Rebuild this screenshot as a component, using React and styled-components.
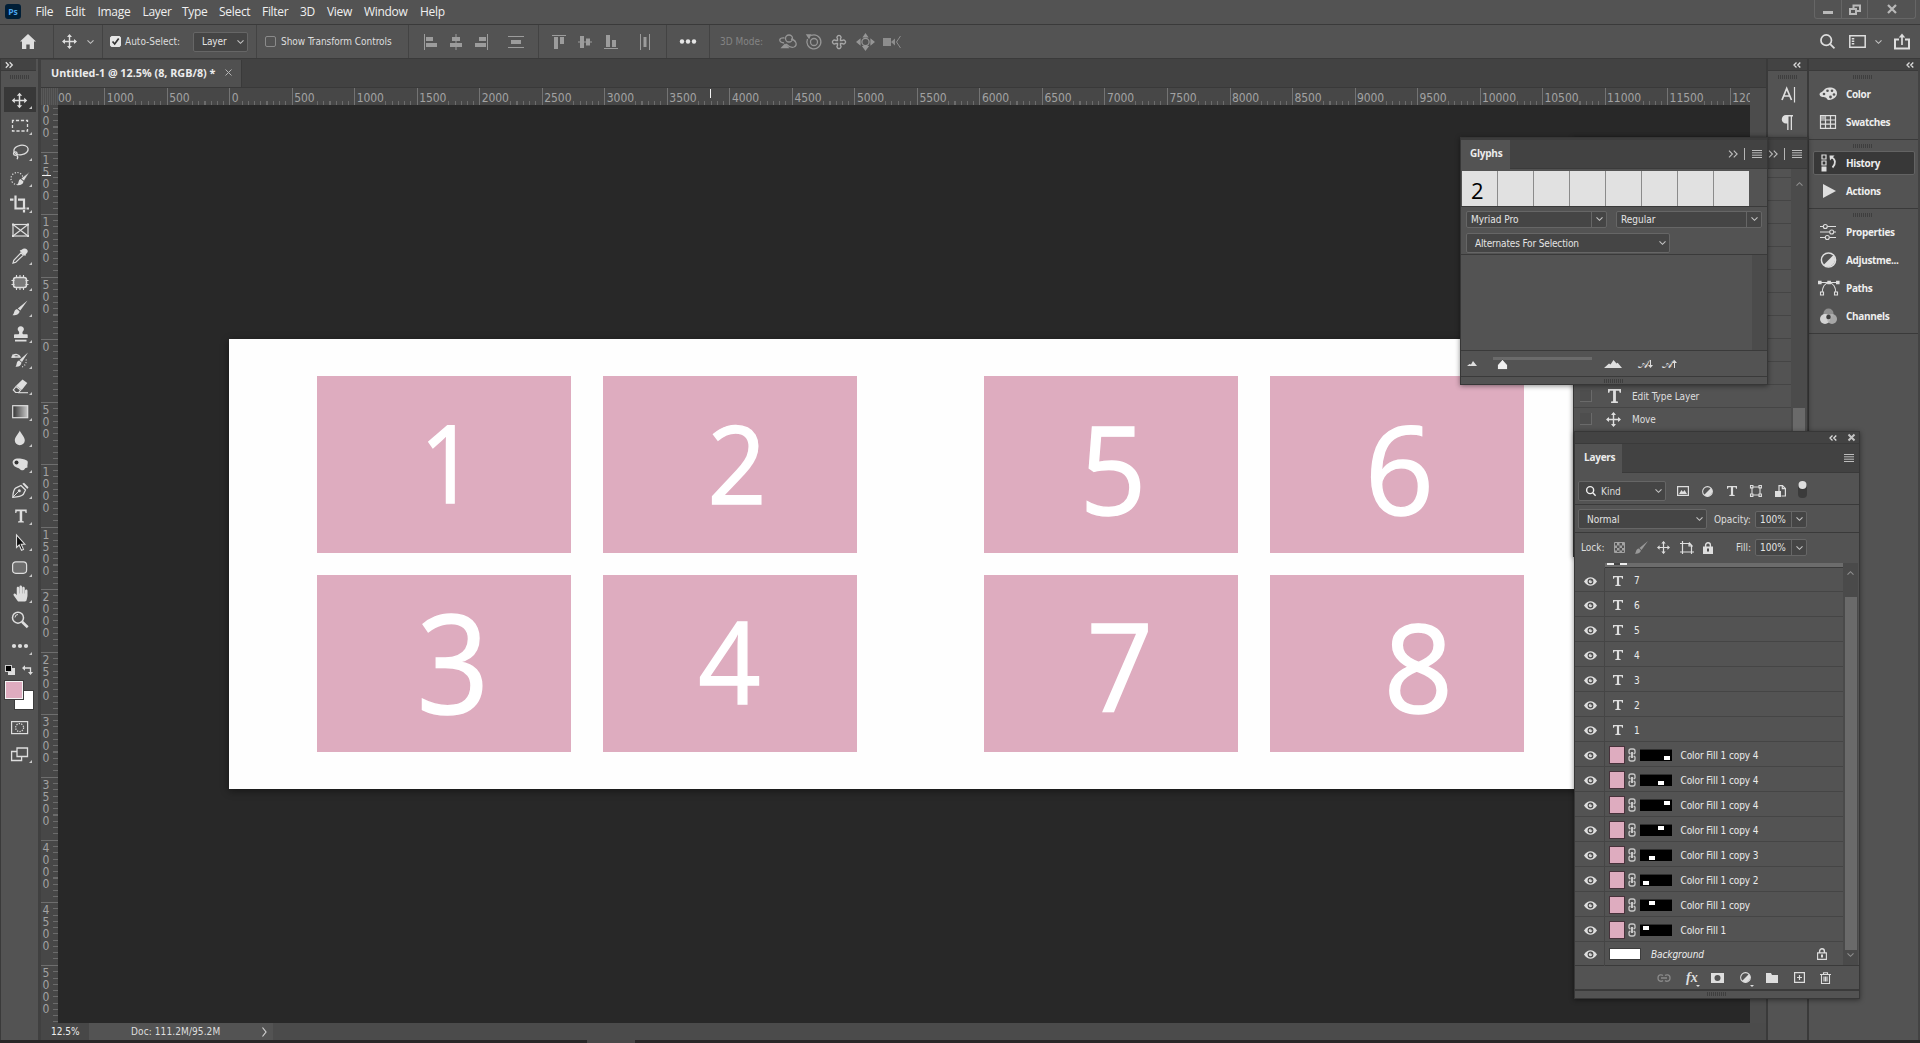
import React from 'react'
import styled, { createGlobalStyle } from 'styled-components'
import { FaHandPaper } from 'react-icons/fa'

const line = '#3a3a3a'
const panel = '#535353'
const dark = '#424242'
const ink = '#dedede'
const pink = '#deacbf'
const tahoma = '"DejaVu Sans Condensed", "DejaVu Sans", sans-serif'
const segoe = '"Open Sans", "Noto Sans", sans-serif'

const GlobalStyle = createGlobalStyle`
  * { box-sizing: border-box; }
  body { margin: 0; background: ${panel}; overflow: hidden; }
  svg { display: block; flex: none; overflow: visible; }
`

const Screen = styled.div`
  position: relative;
  display: flex;
  flex-direction: column;
  width: 1920px;
  height: 1043px;
  overflow: hidden;
  background: ${panel};
  color: ${ink};
  font-family: ${tahoma};
  font-size: 10px;
  white-space: nowrap;
`

/* ---------- menu bar ---------- */

const MenuBar = styled.div`
  display: flex;
  align-items: center;
  height: 25px;
  padding: 0 4px 1px 5px;
  border-bottom: 1px solid ${line};
  font-family: ${segoe};
  font-size: 12px;
  color: #f0f0f0;
`

const Logo = styled.div`
  width: 16px;
  height: 15px;
  margin-right: 14.5px;
  border-radius: 3px;
  background: #001e36;
  color: #4aa5ee;
  font: bold 8.5px/15px ${segoe};
  text-align: center;
`

const MenuItem = styled.div`
  width: ${p => p.$w}px;
  letter-spacing: -0.3px;
`

const WindowButtons = styled.div`
  display: flex;
  align-self: flex-start;
  margin-left: auto;
  width: 102px;
  height: 19px;
  border: 1px solid #666;
  border-top: 0;
  border-radius: 0 0 3px 3px;
`

const WindowButton = styled.div`
  display: flex;
  justify-content: center;
  padding-top: 4px;
  width: ${p => p.$w}px;
  border-right: ${p => (p.$last ? 0 : '1px solid #666')};
`

/* ---------- options bar ---------- */

const OptionsBar = styled.div`
  display: flex;
  height: 34px;
  border-bottom: 1px solid ${line};
`

const Group = styled.div`
  display: flex;
  align-items: center;
  width: ${p => (p.$w ? `${p.$w}px` : 'auto')};
  flex: ${p => (p.$w ? 'none' : 1)};
  padding-left: ${p => p.$pl}px;
  gap: ${p => p.$gap || 0}px;
  border-right: ${p => (p.$w ? '1px solid #434343' : 0)};
`

const Check = styled.div`
  width: 11px;
  height: 11px;
  border: 1px solid ${p => (p.$on ? '#e6e6e6' : '#8b8b8b')};
  border-radius: 2px;
  background: ${p => (p.$on ? '#e6e6e6' : 'transparent')};
`

const Label = styled.span`
  width: ${p => (p.$w ? `${p.$w}px` : 'auto')};
  margin-left: ${p => p.$ml || 0}px;
  letter-spacing: ${p => p.$ls || 0}px;
  color: ${p => p.$c || ink};
`

const Select = styled.div`
  display: flex;
  align-items: center;
  justify-content: space-between;
  width: ${p => p.$w}px;
  height: ${p => p.$h || 20}px;
  margin-left: ${p => p.$ml || 0}px;
  padding: 0 ${p => (p.$pr === undefined ? 3 : p.$pr)}px 0 ${p => p.$pl || 8}px;
  border: 1px solid #666;
  border-radius: 2px;
  background: #454545;
  color: #e4e4e4;
  letter-spacing: ${p => p.$ls || 0}px;
`

const Arrow = styled.div`
  display: flex;
  align-items: center;
  justify-content: center;
  align-self: stretch;
  width: 15px;
  border-left: 1px solid #666;
`

const Spacer = styled.div`
  width: ${p => p.$w}px;
  flex: ${p => (p.$w ? 'none' : 1)};
`

/* ---------- workspace ---------- */

const Workspace = styled.div`
  display: flex;
  height: 981px;
`

const Tools = styled.div`
  width: 41px;
  padding-right: 2px;
  border-left: 1px solid ${line};
  border-right: 3px solid #404040;
`

const StripHead = styled.div`
  display: flex;
  align-items: center;
  justify-content: ${p => (p.$left ? 'flex-start' : 'flex-end')};
  height: 12px;
  padding: 0 ${p => p.$px || 4}px;
  background: #434343;
  border-bottom: 1px solid ${line};
`

const Grip = styled.div`
  width: 19px;
  height: 4px;
  margin: ${p => p.$m};
  background: repeating-linear-gradient(90deg, #3e3e3e 0 1px, transparent 1px 2px);
`

const Tool = styled.div`
  width: 32px;
  height: 26px;
  margin-left: 3px;
  background: ${p => (p.$on ? '#383838' : 'transparent')};
  background-clip: content-box;
  padding-bottom: 1px;
`

const ColorWell = styled.div`
  position: relative;
  height: 54px;
  margin-top: 2px;
`

const Swatch = styled.div`
  position: absolute;
  left: ${p => p.$x}px;
  top: ${p => p.$y}px;
  width: ${p => p.$s}px;
  height: ${p => p.$s}px;
  background: ${p => p.$c};
  border: ${p => p.$b || 0};
`

const SwapIcon = styled.div`
  position: absolute;
  left: 21px;
  top: 4px;
`

const Document = styled.div`
  width: 1725px;
  display: flex;
  flex-direction: column;
`

const TabBar = styled.div`
  height: 29px;
  padding-top: 1px;
  background: ${dark};
  border-bottom: 1px solid #393939;
`

const DocTab = styled.div`
  display: flex;
  align-items: center;
  justify-content: space-between;
  width: 201px;
  height: 27px;
  padding: 0 9px 2px 10px;
  background: #505050;
  border-right: 1px solid ${line};
  color: #ececec;
  font: bold 10.8px ${segoe};
`

const RulerRow = styled.div`
  display: flex;
  height: 17px;
`

const Corner = styled.div`
  width: 17px;
  background: repeating-linear-gradient(90deg, #595959 0 1px, #4c4c4c 1px 2px);
`

const Ruler = styled.div`
  position: relative;
  display: flex;
  width: 1692px;
  overflow: hidden;
  background: #474747;
  color: #a2a2a2;
  font-size: 12px;
  letter-spacing: -0.1px;
`

const RulerCell = styled.div`
  flex: none;
  width: 62.53px;
  padding-left: 1.5px;
  border-left: 1px solid #737373;
  line-height: 20px;
  background: repeating-linear-gradient(90deg, #6b6b6b 0 1px, transparent 1px 6.25px) -1px 100% / 100% 4px no-repeat;
  &:first-child { margin-left: -16.3px; padding-left: 15.3px; }
`

const CellText = styled.span`
  display: inline-block;
  height: 17px;
  background: #474747;
`

const VRuler = styled.div`
  position: relative;
  width: 17px;
  overflow: hidden;
  background: #474747;
  color: #a2a2a2;
  font-size: 12px;
`

const VCell = styled.div`
  height: 62.53px;
  padding: 1px 0 0 1.5px;
  border-top: 1px solid #6e6e6e;
  line-height: 12px;
  white-space: pre;
  background: repeating-linear-gradient(180deg, #6b6b6b 0 1px, transparent 1px 6.25px) 100% -1px / 5px 100% no-repeat;
  &:first-child { margin-top: -15.7px; padding-top: 13px; }
`

const Mark = styled.div`
  position: absolute;
  left: ${p => p.$x}px;
  top: ${p => p.$y}px;
  width: ${p => p.$w}px;
  height: ${p => p.$h}px;
  background: #f2f2f2;
`

const Stage = styled.div`
  display: flex;
  height: 918px;
`

const Canvas = styled.div`
  width: 1692px;
  overflow: hidden;
  background: #282828;
`

const Artboard = styled.div`
  display: grid;
  grid-template-columns: 254px 254px 254px 254px;
  grid-template-rows: 177px 177px;
  column-gap: 32px;
  row-gap: 22px;
  align-content: start;
  width: 1460px;
  height: 450px;
  margin: 234px 0 0 171px;
  padding: 37px 88px;
  background: #fefefe;
  box-shadow: 0 2px 8px rgba(0, 0, 0, 0.45);
`

const Card = styled.div`
  position: relative;
  background: ${pink};
  margin-left: ${p => (p.$right ? 95 : 0)}px;
  margin-right: ${p => (p.$right ? -95 : 0)}px;
`

const Digit = styled.span`
  position: absolute;
  left: ${p => p.$x}px;
  top: ${p => p.$y}px;
  font: ${p => p.$s}px/1 ${segoe};
  color: #fff;
  -webkit-text-stroke: 1.4px #fff;
  transform: scaleX(${p => p.$k});
`

const VScroll = styled.div`
  width: 16px;
  background: #4c4c4c;
`

const Status = styled.div`
  display: flex;
  height: 17px;
  line-height: 18px;
  background: #4b4b4b;
`

const Zoom = styled.div`
  width: 48px;
  padding-left: 10px;
  background: #474747;
  color: #eee;
`

const DocInfo = styled.div`
  display: flex;
  align-items: center;
  width: 184px;
  padding-left: 42px;
  background: #535353;
  letter-spacing: 0.1px;
`

const NarrowDock = styled.div`
  width: 41px;
  border-left: 2px solid ${line};
`

const Dock = styled.div`
  width: 113px;
  border-left: 2px solid ${line};
  border-right: 2px solid #434343;
`

const DockGroup = styled.div`
  padding: 4px 3px 0 4px;
  height: ${p => p.$h}px;
  border-bottom: 1px solid ${line};
`

const DockItem = styled.div`
  display: flex;
  align-items: center;
  gap: 8px;
  height: 24px;
  margin-bottom: 4px;
  padding-left: 5px;
  border: 1px solid ${p => (p.$on ? '#636363' : 'transparent')};
  border-radius: 2px;
  background: ${p => (p.$on ? '#383838' : 'transparent')};
  color: #eee;
  font: bold 10px ${segoe};
  letter-spacing: -0.35px;
`

const BottomEdge = styled.div`
  display: flex;
  height: 3px;
  padding-left: 587px;
  background: #292627;
  &::before { content: ''; width: 48px; background: #4a4748; }
`

/* ---------- floating panels ---------- */

const Float = styled.div`
  position: absolute;
  left: ${p => p.$x}px;
  top: ${p => p.$y}px;
  width: ${p => p.$w}px;
  height: ${p => p.$h}px;
  display: flex;
  flex-direction: column;
  background: ${panel};
  border: 1px solid #373737;
  box-shadow: 0 1px 5px rgba(0, 0, 0, 0.45);
`

const PanelTabs = styled.div`
  display: flex;
  align-items: center;
  height: ${p => p.$h}px;
  flex: none;
  padding-right: ${p => p.$pr || 5}px;
  background: ${dark};
  border-top: ${p => p.$bt || 0};
  border-bottom: 1px solid ${line};
`

const PanelTab = styled.div`
  align-self: stretch;
  display: flex;
  align-items: center;
  width: ${p => p.$w}px;
  margin-bottom: -1px;
  padding: 0 0 3px 9px;
  background: ${panel};
  color: #ececec;
  font: bold 10px ${segoe};
  letter-spacing: -0.25px;
`

const Row = styled.div`
  display: flex;
  align-items: center;
  flex: none;
  height: ${p => p.$h}px;
  padding: ${p => p.$pt || 0}px 0 ${p => p.$pb || 0}px ${p => p.$pl || 0}px;
  border-bottom: ${p => (p.$line ? `1px solid ${line}` : 0)};
`

const GlyphCells = styled.div`
  display: grid;
  flex: none;
  grid-template-columns: repeat(8, 1fr);
  gap: 1px;
  width: 287px;
  height: 35px;
  margin: 2px 0 0 1px;
  background: #8b8b8b;
`

const GlyphCell = styled.div`
  padding: 5px 0 0 9px;
  background: #e1e1e1;
  color: #000;
  font: 22px/28px ${segoe};
`

const GlyphArea = styled.div`
  flex: none;
  height: 96px;
  border-bottom: 1px solid ${line};
  background: linear-gradient(#4b4b4b, #4b4b4b) 100% 0 / 15px 100% no-repeat;
`

const Slider = styled.div`
  display: flex;
  flex-direction: column;
  align-self: flex-start;
  width: 99px;
  margin: 6px 12px 0 16px;
`

const Track = styled.div`
  height: 3px;
  background: #6b6b6b;
`

const Thumb = styled.div`
  margin: -1px 0 0 4px;
`

const ScriptA = styled.span`
  width: ${p => p.$w}px;
  font-size: 12px;
  line-height: 12px;
`

const HistoryBody = styled.div`
  display: flex;
  flex: 1;
`

const HistoryList = styled.div`
  width: 217px;
  padding-top: 8px;
`

const HistoryRow = styled.div`
  display: flex;
  align-items: center;
  height: 23.06px;
  padding-left: 6px;
  border-top: 1px solid #454545;
  letter-spacing: -0.1px;
`

const HistoryBox = styled.div`
  width: 12px;
  height: 12px;
  border: solid #6a6a6a;
  border-width: 0 1px 1px 0;
  margin-right: 13px;
  background: #4e4e4e;
`

const HistoryScroll = styled.div`
  display: flex;
  flex-direction: column;
  align-items: center;
  width: 16px;
  padding-top: 13px;
  background: #4b4b4b;
`

const ScrollThumb = styled.div`
  width: 12px;
  height: ${p => p.$h}px;
  margin-top: ${p => p.$mt}px;
  background: #6a6a6a;
`

const LayersBody = styled.div`
  display: flex;
  height: 403px;
  border-bottom: 1px solid ${line};
`

const LayerList = styled.div`
  width: 268px;
`

const ClippedRow = styled.div`
  height: 5px;
  margin-left: 30px;
  padding-left: 2px;
  background: #6c6c6c;
  border-bottom: 1px solid #3a3a3a;
  &::before {
    content: '';
    display: block;
    width: 20px;
    height: 2px;
    background: linear-gradient(90deg, #eee 0 7px, #444 7px 13px, #eee 13px);
  }
`

const LayerRow = styled.div`
  display: flex;
  align-items: center;
  height: ${p => p.$h || 25}px;
  padding-top: ${p => (p.$last ? 0 : 2)}px;
  border-bottom: ${p => (p.$last ? 0 : '1px solid #454545')};
  color: #ececec;
  letter-spacing: -0.1px;
`

const EyeCell = styled.div`
  display: flex;
  align-items: center;
  justify-content: center;
  align-self: stretch;
  width: 30px;
  margin-top: -2px;
  padding: 3px 0 0 1px;
  border-right: 1px solid #454545;
`

const FillThumb = styled.div`
  width: 16px;
  height: 18px;
  margin: 0 3px 0 4px;
  border-bottom: 1px solid #e8e8e8;
  &::before {
    content: '';
    display: block;
    height: 16px;
    border: 1px solid #47323b;
    background: ${pink};
  }
`

const Mask = styled.div`
  position: relative;
  width: 32px;
  height: 12px;
  margin: 0 8.5px 0 4px;
  background: #000;
  border-top: 1px solid #2f2f2f;
  &::before {
    content: '';
    position: absolute;
    left: ${p => p.$x}px;
    top: ${p => p.$y}px;
    width: 6px;
    height: 4px;
    background: #fff;
  }
`

const PageThumb = styled.div`
  width: 32px;
  height: 12px;
  margin: -1px 10px 0 4px;
  background: #fff;
  border: 1px solid #3c3c3c;
`

const LayerScroll = styled.div`
  display: flex;
  flex-direction: column;
  align-items: center;
  width: 15px;
  padding: 8px 0 8px;
  background: #4a4a4a;
`

const FooterIcons = styled.div`
  display: flex;
  align-items: center;
  height: 25px;
  padding-left: 82px;
  border-bottom: 2px solid ${line};
`

/* ---------- icons ---------- */

const Chevron = ({ up, c = '#c4c4c4', w = 7 }) => (
  <svg width={w} height="4" viewBox="0 0 7 4" fill="none" stroke={c} strokeWidth="1.1">
    <path d={up ? 'M.5 3.7 3.5.7l3 3' : 'M.5.3l3 3 3-3'} />
  </svg>
)

const Double = ({ left, big, c = '#dcdcdc' }) => (
  <svg width={big ? 10 : 8} height={big ? 8 : 6} viewBox="0 0 8 6" fill="none" stroke={c} strokeWidth={big ? 0.9 : 1.3}>
    <path d={left ? 'M3.5.5 1 3l2.5 2.5M7.3.5 4.8 3l2.5 2.5' : 'M.8.3 3.5 3 .8 5.7M4.6.3 7.3 3 4.6 5.7'} />
  </svg>
)

const Burger = () => (
  <svg width="10" height="8" stroke="#bdbdbd" strokeWidth="1"><path d="M0 .5h10M0 2.8h10M0 5.2h10M0 7.5h10" /></svg>
)

const Bar = () => <svg width="1" height="12"><path d="M.5 0v12" stroke="#b5b5b5" /></svg>

const MoveIcon = ({ s = 15 }) => (
  <svg width={s} height={s} viewBox="0 0 15 15">
    <path d="M7.5 1v13M1 7.5h13" stroke={ink} strokeWidth="1.4" />
    <path d="M7.5 0 10 3H5zM7.5 15 10 12H5zM0 7.5 3 5v5zM15 7.5 12 5v5z" fill={ink} />
  </svg>
)

const TypeIcon = ({ w = 11, h = 12 }) => (
  <svg width={w} height={h} viewBox="0 0 11 12" preserveAspectRatio="none">
    <path d="M0 0h11v3.3H9.9L9.4 1.5H6.7v8.9l1.7.4V12H2.6v-1.200l1.700-.4V1.500H1.600l-.5 1.800H0z" fill={ink} />
  </svg>
)

const AdjustIcon = ({ s = 12 }) => (
  <svg width={s} height={s} viewBox="0 0 16 16">
    <circle cx="8" cy="8" r="7.1" fill="none" stroke={ink} strokeWidth="1.5" />
    <path d="M13 3A7.1 7.1 0 0 1 3 13z" fill={ink} />
  </svg>
)

const SearchIcon = ({ s = 14, c = ink, sw = 1.6 }) => (
  <svg width={s} height={s} viewBox="0 0 14 14" fill="none" stroke={c} strokeWidth={sw}>
    <circle cx="5.8" cy="5.8" r="4.9" /><path d="m9.5 9.5 4 4" />
  </svg>
)

const BrushIcon = ({ c = ink, s = 14 }) => (
  <svg width={s} height={s} viewBox="0 0 14 14" fill={c}>
    <path d="M14 0 7 9.7 4.8 7.6z" /><path d="M4.2 8.2 6.3 10.3C6.2 12.6 3.5 14 0 13.6 1.5 12 1 8.6 4.2 8.2z" />
  </svg>
)

const LockIcon = ({ open }) => (
  <svg width="10" height="12" viewBox="0 0 10 12">
    <path d="M2.6 5V3.2a2.4 2.4 0 0 1 4.8 0V5" fill="none" stroke={ink} strokeWidth="1.4" />
    {open
      ? <path d="M.6 4.9h8.8v6.5H.6z" fill="none" stroke={ink} strokeWidth="1.1" />
      : <path d="M0 4.5h10V12H0z" fill={ink} />}
    <path d="M4 6.6h2v2.8H4z" fill={open ? ink : '#4a4a4a'} />
  </svg>
)

const Eye = () => (
  <svg width="13" height="9" viewBox="0 0 13 9">
    <path d="M0 4.500C2 1.300 4.200.2 6.500.2S11 1.300 13 4.500C11 7.700 8.800 8.800 6.500 8.800S2 7.700 0 4.500z" fill={ink} />
    <circle cx="6.5" cy="4.5" r="2.900" fill="#4a4a4a" />
    <circle cx="6.5" cy="4.5" r="1.700" fill={ink} />
    <circle cx="7.2" cy="3.8" r=".7" fill="#4a4a4a" />
  </svg>
)

const ChainIcon = () => (
  <svg width="8" height="14" viewBox="0 0 8 14" fill="none" stroke="#c8c8c8" strokeWidth="1.3">
    <path d="M1 5.5V3a2 2 0 0 1 2-2h2a2 2 0 0 1 2 2v2.500M1 8.500V11a2 2 0 0 0 2 2h2a2 2 0 0 0 2-2V8.500" />
    <path d="M4 4v6" strokeWidth="2" />
    <path d="M1 5.500h1.500M7 5.500H5.500M1 8.500h1.500M7 8.500H5.500" />
  </svg>
)

// every tool is drawn in its own 32x26 cell
const toolIcons = [
  <g><path d="M15.5 7.5v12M9.5 13.5h12" stroke={ink} strokeWidth="1.5" /><path d="M15.5 5.8l2.7 3h-5.4zM15.5 21.2l2.700-3h-5.400zM7.800 13.500l3-2.700v5.400zM23.200 13.500l-3-2.700v5.400z" fill={ink} /></g>,
  <rect x="8.5" y="7.5" width="15" height="10.5" fill="none" stroke={ink} strokeWidth="1.3" strokeDasharray="3.2 1.8" strokeDashoffset="1.6" />,
  <g fill="none" stroke={ink} strokeWidth="1.3"><ellipse cx="17" cy="11" rx="7.2" ry="4.8" transform="rotate(-10 17 11)" /><circle cx="11.3" cy="14.6" r="1.8" /><path d="M12.5 16.200c1.500.8 1.500 2.300.6 4" /></g>,
  <g><circle cx="13" cy="13.5" r="6" fill="none" stroke={ink} strokeWidth="1.2" strokeDasharray="1.2 1.6" /><path d="M25.500 7 20 16l-3-2.500z" fill={ink} stroke={panel} strokeWidth=".6" /><path d="M16.500 14l3 2.600c-.3 2.800-3 4-6.500 3.700 2-1.500 1-5.500 3.500-6.300z" fill={ink} /></g>,
  <g fill="none" stroke={ink} strokeWidth="2.2"><path d="M11.5 4.500v13h10" /><path d="M14 8.700h6V17M20 19v2.500" /><path d="M6 8.700h3.500M22.500 17.500h2.500" /></g>,
  <g fill="none" stroke={ink} strokeWidth="1.2"><rect x="9" y="7.5" width="15" height="11.5" /><path d="m9 7.500 15 11.500M24 7.500 9 19" /><path d="M8 7.500h2M23 7.500h2M8 19h2M23 19h2" strokeWidth="2" /></g>,
  <g><path d="M23 6.500c1.500 1.500.7 3-1 4.500l-.7 2-1.300-.8-3.500-3.500-.8-1.200 2-.7c1.500-1.500 3.800-1.800 5.300-.3z" fill={ink} /><path d="m17 9.800 2.300 2.300-7.500 7.200-2.800.8.800-2.800z" fill="none" stroke={ink} strokeWidth="1.2" /></g>,
  <g stroke={ink}><rect x="9.5" y="8.5" width="13" height="10" rx="2.5" fill="#7a7a7a" strokeWidth="1.5" /><path d="M12.500 6v3M16 6v3M19.500 6v3M12.500 18v3M16 18v3M19.500 18v3M7.500 11.500h3M7.500 15.500h3M21.500 11.500h3M21.500 15.500h3" strokeWidth="1.1" /></g>,
  <g fill={ink}><path d="M23.500 5.500 16.300 15.600l-2.500-2.200z" /><path d="m13 14 2.500 2.300c0 2.700-3 4.300-7 4 2-1.500 1.300-5.700 4.500-6.300z" /></g>,
  <g fill={ink}><path d="M16.700 5.200c2 0 3.200 1.400 3.200 3 0 1.500-1.500 2-1.500 3.500 0 1 .6 1.600 1.500 1.600h2.600c1 0 1.200.5 1.200 1.200v2.500H10v-2.500c0-.7.3-1.200 1.200-1.200h2.600c.9 0 1.400-.6 1.400-1.600 0-1.500-1.500-2-1.500-3.500 0-1.600 1-3 3-3z" /><path d="M11 18.700h11.500v1.800H11z" /></g>,
  <g><path d="M24 5.500 18 15l-2.500-2zM15 13.500l2.500 2c-.3 3-2.500 4.500-6 4.200 1.500-1.500.7-5.500 3.500-6.200z" fill={ink} /><path d="M8 10h8c-1-3-5-3-6.500-1.500" fill="none" stroke={ink} strokeWidth="1.3" /><path d="m7 10.800 2-4 2.500 3.600z" fill={ink} /><path d="M22 12.500c1 3-1 6.500-4 7.500" fill="none" stroke={ink} strokeWidth="1.1" strokeDasharray="1 1.700" /></g>,
  <g><path d="m18.500 6.500 4.800 3.500-5.500 7-5.800-4.200z" fill={ink} /><path d="m12 13.500-2.700 3.500 2.300 2.500h3l2-2.500z" fill="none" stroke={ink} strokeWidth="1.2" /><path d="M14 19.700h10" stroke={ink} strokeWidth="1.1" /></g>,
  <g><defs><linearGradient id="toolGradient"><stop offset="0" stopColor="#333" /><stop offset="1" stopColor="#c9c9c9" /></linearGradient></defs><rect x="8.7" y="6.7" width="15" height="12" fill="url(#toolGradient)" stroke={ink} strokeWidth="1.2" /></g>,
  <path d="M15.800 5.500c1 3.200 5 6.200 5 9.700a5 5 0 0 1-10 0c0-3.500 4-6.500 5-9.700z" fill={ink} />,
  <g><path d="M9 13c-1.500-4 2-6 7-5.500 4 .3 6 1.500 7.500 2.500.8 2-.5 4 0 6.500-1.500.8-2 0-3 1.800-1 1.600-3.500 1.200-4.500 0-2-2.300-5.500-1.300-7-5.300z" fill={ink} /><circle cx="12.5" cy="11.5" r="2" fill="#333" /></g>,
  <g><path d="M8.800 20.300c.2-4.500.8-8 3.200-9.500l5-2.300 4.500 4.500-2.300 4.500c-2 2-5.800 2.500-10.400 2.800z" fill="none" stroke={ink} strokeWidth="1.3" /><path d="m18.300 6.700 1.700-1 4.500 4.500-1.200 1.700z" fill={ink} /><path d="m9 20 5.500-5.500" stroke={ink} /><circle cx="15.3" cy="13.7" r="1.5" fill={ink} /></g>,
  <g transform="translate(11.2 6.5)"><path d="M0 0h11.500v3.500h-1.100L9.900 1.700H7v9.800l1.700.4V13H2.800v-1.100l1.700-.4V1.700H1.600l-.5 1.800H0z" fill={ink} /></g>,
  <path d="M12.500 6v12.500l2.700-2.500 2.300 5.300 2-.9-2.300-5.200h3.600z" fill="#111" stroke={ink} strokeWidth="1.1" />,
  <rect x="8.6" y="6.8" width="14" height="11.5" rx="3.2" fill="#6e6e6e" stroke={ink} strokeWidth="1.2" />,
  <FaHandPaper x="8.5" y="4.500" size="16" color={ink} />,
  <g fill="none" stroke={ink}><circle cx="14" cy="10.7" r="5.5" strokeWidth="1.5" /><path d="M11 10.500a3 3 0 0 1 3-3" strokeWidth="1" /><path d="m18 14.700 5.700 5.500" strokeWidth="2.600" /></g>,
  <g fill={ink}><circle cx="10" cy="13" r="2.1" /><circle cx="16" cy="13" r="2.1" /><circle cx="22" cy="13" r="2.1" /></g>,
]
const noFlyout = [5, 20]

const ToolCell = ({ children, flyout, on }) => (
  <Tool $on={on}>
    <svg width="32" height="25" viewBox="0 0 32 25">
      {children}
      {flyout && <path d="M28 19v3h-3z" fill="#c8c8c8" />}
    </svg>
  </Tool>
)

const AlignSvg = ({ w, children }) => (
  <svg width={w} height="16" viewBox={`0 0 ${w} 16`} fill="#9c9c9c">{children}</svg>
)

/* ---------- parts ---------- */

const menus = [
  ['File', 29.5], ['Edit', 32.5], ['Image', 45], ['Layer', 39.5], ['Type', 37], ['Select', 43],
  ['Filter', 38], ['3D', 27], ['View', 37], ['Window', 56], ['Help', 40],
]

const TopMenu = () => (
  <MenuBar>
    <Logo>Ps</Logo>
    {menus.map(([name, w]) => <MenuItem key={name} $w={w}>{name}</MenuItem>)}
    <WindowButtons>
      <WindowButton $w={28}><svg width="10" height="10"><path d="M0 7h10v3H0z" fill="#b9b9b9" /></svg></WindowButton>
      <WindowButton $w={27}>
        <svg width="12" height="11" fill="none" stroke="#b9b9b9" strokeWidth="2"><path d="M1 5h6v5H1zM4.5 4V1.500H11V7H8" /></svg>
      </WindowButton>
      <WindowButton $w={48} $last>
        <svg width="10" height="10" stroke="#b9b9b9" strokeWidth="2.2"><path d="m1 1 8 8M9 1 1 9" /></svg>
      </WindowButton>
    </WindowButtons>
  </MenuBar>
)

const Options = () => (
  <OptionsBar>
    <Group $w={54} $pl={20}>
      <svg width="16" height="15" viewBox="0 0 16 15" fill={ink}><path d="M8 0l8 7.500h-2V15H9.700v-4.500H6.300V15H2V7.500H0z" /></svg>
    </Group>
    <Group $w={49} $pl={8} $gap={10}><MoveIcon /><Chevron /></Group>
    <Group $w={154} $pl={7}>
      <Check $on><svg width="9" height="9" fill="none" stroke="#333" strokeWidth="1.7"><path d="M1.500 4.500 3.700 7l4-5.500" /></svg></Check>
      <Label $ml={4} $w={68}>Auto-Select:</Label>
      <Select $w={55} $ls={-0.1}>Layer<Chevron /></Select>
    </Group>
    <Group $w={152} $pl={8}><Check /><Label $ml={5} $ls={-0.05}>Show Transform Controls</Label></Group>
    <Group $w={130} $pl={15}>
      <AlignSvg w={13}><path d="M0 0h1v16H0zM2 3h7v4H2zM2 9h11v4H2z" /></AlignSvg>
      <Spacer $w={13} />
      <AlignSvg w={12}><path d="M5.500 0h1v16h-1zM2 3h8v4H2zM0 9h12v4H0z" /></AlignSvg>
      <Spacer $w={13} />
      <AlignSvg w={13}><path d="M12 0h1v16h-1zM4 3h7v4H4zM0 9h11v4H0z" /></AlignSvg>
      <Spacer $w={20} />
      <AlignSvg w={16}><path d="M0 2h16v1H0zM3 6h10v4H3zM0 13h16v1H0z" /></AlignSvg>
    </Group>
    <Group $w={128} $pl={13}>
      <AlignSvg w={14}><path d="M0 1h14v1H0zM2 3h4v12H2zM8 3h4v7H8z" /></AlignSvg>
      <Spacer $w={12} />
      <AlignSvg w={14}><path d="M0 7.500h14v1H0zM2 2h4v12H2zM8 4.500h4v7H8z" /></AlignSvg>
      <Spacer $w={12} />
      <AlignSvg w={14}><path d="M0 14h14v1H0zM2 1h4v12H2zM8 6h4v7H8z" /></AlignSvg>
      <Spacer $w={22} />
      <AlignSvg w={10}><path d="M0 0h1v16H0zM3.500 3h3v10h-3zM9 0h1v16H9z" /></AlignSvg>
    </Group>
    <Group $w={43} $pl={13}>
      <svg width="16" height="5" fill="#e6e6e6"><circle cx="2" cy="2.5" r="2.2" /><circle cx="8" cy="2.5" r="2.2" /><circle cx="14" cy="2.5" r="2.2" /></svg>
    </Group>
    <Group $pl={10}>
      <Label $c="#848484" $w={59}>3D Mode:</Label>
      <svg width="18" height="16" fill="none" stroke="#969696" strokeWidth="1.3">
        <path d="M5 9C-1 8-.5 3.500 5.500 4M12 5c5 1 7 6 3 8-3 1-6-1-8-3" /><circle cx="10" cy="4.5" r="3.5" /><path d="M3 13.500h6l-3-3z" fill="#969696" />
      </svg>
      <Spacer $w={9} />
      <svg width="16" height="16" fill="none" stroke="#969696" strokeWidth="1.3"><path d="M5 1.500A7 7 0 1 1 1.500 5" /><circle cx="8" cy="8" r="3.5" /><path d="m1 1 3.500 0L3 4z" fill="#969696" /></svg>
      <Spacer $w={9} />
      <svg width="16" height="16" viewBox="0 0 16 16" fill="none" stroke="#a8a8a8" strokeWidth="1.4">
        <path d="M6.500 6.500V4.800a2 2 0 1 1 3 0v1.700h1.700a2 2 0 1 1 0 3H9.500v1.700a2 2 0 1 1-3 0V9.500H4.800a2 2 0 1 1 0-3z" />
      </svg>
      <Spacer $w={10} />
      <svg width="17" height="16" viewBox="0 0 17 16" fill="none" stroke="#969696" strokeWidth="1.2">
        <circle cx="8.5" cy="8" r="3.6" /><path d="M8.500 0 10.500 3H6.500zM8.500 16 11 12.500H6zM0 8l3-2.500v5zM17 8l-3-2.500v5z" fill="#969696" />
      </svg>
      <Spacer $w={9} />
      <svg width="18" height="14" fill="#8d8d8d"><path d="M0 3h8v8H0zM8 7l4-3.500v7z" /><path d="m17.500 1-4 6 4 6" fill="none" stroke="#8d8d8d" /></svg>
      <Spacer />
      <SearchIcon s={15} />
      <Spacer $w={14} />
      <svg width="17" height="13" fill="none" stroke={ink} strokeWidth="1.5"><path d="M.8.8h15.400v11.400H.8z" /><path d="M4 3v7" strokeWidth="2.5" strokeDasharray="1.5 1" /></svg>
      <Spacer $w={9} />
      <Chevron />
      <Spacer $w={12} />
      <svg width="16" height="17" fill="none" stroke={ink} strokeWidth="2"><path d="M5 6.500H1v9h14v-9h-4" /><path d="M8 12V2" strokeWidth="1.7" /><path d="m4.800 4.500 3.200-4 3.200 4z" fill={ink} stroke="none" /></svg>
      <Spacer $w={10} />
    </Group>
  </OptionsBar>
)

const ToolColumn = () => (
  <Tools>
    <StripHead $left><Double /></StripHead>
    <Grip $m="4px auto 8px 9px" />
    {toolIcons.map((icon, i) => <ToolCell key={i} on={i === 0} flyout={!noFlyout.includes(i)}>{icon}</ToolCell>)}
    <ColorWell>
      <Swatch $x={7} $y={7} $s={7} $c={ink} />
      <Swatch $x={4} $y={4} $s={7} $c="#000" $b="1px solid #ccc" />
      <SwapIcon>
        <svg width="11" height="10" fill="none" stroke={ink} strokeWidth="1.3"><path d="M2 3h6.500v4" /><path d="M0 3l3-2.700v5.400zM8.500 10 6 7h5z" fill={ink} stroke="none" /></svg>
      </SwapIcon>
      <Swatch $x={13} $y={29} $s={20} $c="#fff" $b="1px solid #3c3c3c" />
      <Swatch $x={3} $y={19} $s={20} $c={pink} $b="1px solid #3c3c3c" />
      <Swatch $x={4} $y={20} $s={18} $c={pink} $b="1px solid #f4f4f4" />
    </ColorWell>
    <ToolCell>
      <g fill="none" stroke={ink} strokeWidth="1.2"><rect x="7.6" y="6.6" width="16" height="12" /><circle cx="15.6" cy="12.6" r="4" strokeDasharray="1.3 1.2" /></g>
    </ToolCell>
    <ToolCell flyout>
      <g fill="#535353" stroke={ink} strokeWidth="1.3"><path d="M7.600 10.500h10v9h-10z" /><path d="M13 7h10.500v8.500H13z" /></g>
    </ToolCell>
  </Tools>
)

// the first label of each ruler starts before the visible range
const hLabels = ['00', 1000, 500, ...Array.from({ length: 25 }, (_, i) => i * 500)]
const vLabels = ['000', 1500, 1000, 500, ...Array.from({ length: 11 }, (_, i) => i * 500)]

// digit offsets are measured inside their card
const cards = [
  { n: 1, x: 99.5, y: 32.3, s: 108, k: 0.9 },
  { n: 2, x: 102.8, y: 32, s: 108.5, k: 0.95 },
  { n: 5, x: 93.5, y: 31.4, s: 122.500, k: 0.95 },
  { n: 6, x: 94.4, y: 30.4, s: 123.500, k: 0.98 },
  { n: 3, x: 96.500, y: 18, s: 136.500, k: 0.93 },
  { n: 4, x: 94.400, y: 29.300, s: 113.500, k: 0.96 },
  { n: 7, x: 101.300, y: 29.300, s: 122, k: 0.95 },
  { n: 8, x: 113.400, y: 28.600, s: 123.500, k: 0.98 },
]

const DocumentArea = () => (
  <Document>
    <TabBar>
      <DocTab>
        Untitled-1 @ 12.5% (8, RGB/8) *
        <svg width="7" height="7" stroke="#b5b5b5"><path d="m.5.5 6 6M6.500.5l-6 6" /></svg>
      </DocTab>
    </TabBar>
    <RulerRow>
      <Corner />
      <Ruler>
        {hLabels.map((n, i) => <RulerCell key={i}><CellText>{n}</CellText></RulerCell>)}
        <Mark $x={652} $y={1} $w={1} $h={9} />
      </Ruler>
      <VScroll />
    </RulerRow>
    <Stage>
      <VRuler>
        {vLabels.map((n, i) => <VCell key={i}>{String(n).split('').join('\n')}</VCell>)}
        <Mark $x={1} $y={70} $w={9} $h={1} />
      </VRuler>
      <Canvas>
        <Artboard>
          {cards.map(c => (
            <Card key={c.n} $right={[5, 6, 7, 8].includes(c.n)}>
              <Digit $x={c.x} $y={c.y} $s={c.s} $k={c.k}>{c.n}</Digit>
            </Card>
          ))}
        </Artboard>
      </Canvas>
      <VScroll />
    </Stage>
    <Status>
      <Zoom>12.5%</Zoom>
      <DocInfo>
        Doc: 111.2M/95.2M
        <Spacer />
        <svg width="5" height="10" fill="none" stroke="#d0d0d0" strokeWidth="1.2"><path d="m.5.5 3.500 4.500L.5 9.500" /></svg>
        <Spacer $w={6} />
      </DocInfo>
    </Status>
  </Document>
)

const dockGroups = [
  {
    h: 69,
    items: [
      ['Color', <svg width="19" height="16" viewBox="0 0 19 16"><path d="M4 5C6 2 9 1 12 1.500c4 .5 6 3 6 6s-3 6-8 6.500c-2 .1-2-2-3.500-2.500C4 11 1 11 .5 8.500.5 6.500 2.500 6.500 4 5z" fill={ink} /><g fill={panel}><circle cx="5" cy="8" r="1.3" /><circle cx="8.5" cy="4.8" r="1.3" /><circle cx="13" cy="4.8" r="1.3" /><circle cx="15" cy="8.5" r="1.3" /><circle cx="11.5" cy="11" r="1.4" /></g></svg>],
      ['Swatches', <svg width="19" height="14" viewBox="0 0 19 14" fill="none" stroke={ink}><path d="M1.500.7h15v12.600h-15zM1.500 5h15M1.500 9.200h15M6.500.7v12.600M11.500.7v12.600" strokeWidth="1.2" /><path d="M2 1h4.500v3.500H2z" fill="#aaa" stroke="none" /></svg>],
    ],
  },
  {
    h: 69,
    on: 'History',
    items: [
      ['History', <svg width="19" height="18" viewBox="0 0 19 18" fill="none" stroke={ink} strokeWidth="1.2"><path d="M3 1h4v4H3zM3 7h4v4H3z" /><path d="M2.500 12.500h5v5h-5z" fill={ink} stroke="none" /><path d="M12 3c5 2 5 7 1.500 10.500" strokeWidth="1.8" /><path d="M10.500 1.500h5l-4.500 5z" fill={ink} stroke="none" /></svg>],
      ['Actions', <svg width="19" height="14" viewBox="0 0 19 14" fill={ink}><path d="M4 0v14l13-7z" /></svg>],
    ],
  },
  {
    h: 125,
    items: [
      ['Properties', <svg width="19" height="16" viewBox="0 0 19 16" fill="none" stroke={ink} strokeWidth="1.1"><path d="M1 2.500h3M8.500 2.500H17M1 8h9.500M15 8h2M1 13.500h5M10.500 13.500H17" /><circle cx="6.3" cy="2.5" r="2" /><circle cx="12.7" cy="8" r="2" /><circle cx="8.3" cy="13.5" r="2" /></svg>],
      ['Adjustme...', <svg width="19" height="16"><g transform="translate(1.500 0)"><AdjustIcon s={16} /></g></svg>],
      ['Paths', <svg width="19" height="16" viewBox="0 0 19 16" fill="none" stroke={ink} strokeWidth="1.1"><path d="M0 2.500h20M3 13C3.500 6 6 3 10 3s6.500 3 7 10" /><path d="M-1 .7h3.600v3.600H-1zM17 .7h3.600v3.600H17zM8.300.7h3.600v3.600H8.300z" fill={ink} stroke="none" /><path d="M1.500 12h3v3h-3zM15.500 12h3v3h-3z" fill={panel} /></svg>],
      ['Channels', <svg width="19" height="17" viewBox="0 0 19 17"><circle cx="9.5" cy="5.5" r="5" fill="#8f8f8f" /><circle cx="6" cy="11" r="5" fill="#e0e0e0" fillOpacity=".9" /><circle cx="13" cy="11" r="5" fill="#b5b5b5" fillOpacity=".85" /><circle cx="9.5" cy="9" r="2.3" fill="#3d3d3d" /></svg>],
    ],
  },
]

const Docks = () => (
  <>
    <NarrowDock>
      <StripHead $px={6}><Double left /></StripHead>
      <Grip $m="4px auto 6px 10px" />
      <Row $h={19} $pl={13}>
        <svg width="15" height="16" viewBox="0 0 15 16" fill="none" stroke={ink} strokeWidth="1.7"><path d="M1 13 5.700 1.500 10.500 13M2.700 9h6" /><path d="M13.500 0v15.500" strokeWidth="1.2" /></svg>
      </Row>
      <Row $h={36} $pl={13}>
        <svg width="12" height="15" viewBox="0 0 12 15" fill={ink}><path d="M5 0h7v1.500h-1V15H9.700V1.500H7.500V15H6.200V8.500H5A4.200 4.200 0 0 1 5 0z" /></svg>
      </Row>
    </NarrowDock>
    <Dock>
      <StripHead><Double left /></StripHead>
      {dockGroups.map(g => (
        <DockGroup key={g.items[0][0]} $h={g.h}>
          <Grip $m="0 0 3px 40px" />
          {g.items.map(([name, icon]) => <DockItem key={name} $on={g.on === name}>{icon}{name}</DockItem>)}
        </DockGroup>
      ))}
    </Dock>
  </>
)

const HistoryPanel = () => (
  <Float $x={1573} $y={137} $w={235} $h={420}>
    <PanelTabs $h={31} $bt="2px solid #3c3c3c">
      <Spacer /><Double big c="#bdbdbd" /><Spacer $w={6} /><Bar /><Spacer $w={7} /><Burger />
    </PanelTabs>
    <HistoryBody>
      <HistoryList>
        {Array.from({ length: 9 }, (_, i) => <HistoryRow key={i} />)}
        <HistoryRow><HistoryBox /><Spacer $w={3} /><TypeIcon w={13} h={14} /><Spacer $w={11} /><span>Edit Type Layer</span></HistoryRow>
        <HistoryRow><HistoryBox /><Spacer $w={1} /><MoveIcon /><Spacer $w={11} /><span>Move</span></HistoryRow>
        <HistoryRow />
      </HistoryList>
      <HistoryScroll><Chevron up c="#8e8e8e" /><ScrollThumb $h={60} $mt={222} /></HistoryScroll>
    </HistoryBody>
  </Float>
)

const GlyphsPanel = () => (
  <Float $x={1460} $y={137} $w={308} $h={248}>
    <PanelTabs $h={31} $bt="2px solid #3c3c3c">
      <PanelTab $w={49}>Glyphs</PanelTab>
      <Spacer /><Double big c="#bdbdbd" /><Spacer $w={6} /><Bar /><Spacer $w={7} /><Burger />
    </PanelTabs>
    <GlyphCells>
      {['2', '', '', '', '', '', '', ''].map((g, i) => <GlyphCell key={i}>{g}</GlyphCell>)}
    </GlyphCells>
    <Row $h={1} $line />
    <Row $h={23} $pt={1} $pl={5}>
      <Select $w={141} $h={17} $pl={4} $pr={0}>Myriad Pro<Arrow><Chevron /></Arrow></Select>
      <Select $w={146} $h={17} $pl={4} $pr={0} $ml={9}>Regular<Arrow><Chevron /></Arrow></Select>
    </Row>
    <Row $h={25} $pt={2} $pl={5} $line><Select $w={204} $ls={-0.15}>Alternates For Selection<Chevron /></Select></Row>
    <GlyphArea />
    <Row $h={25} $pl={6}>
      <svg width="10" height="5" fill={ink}><path d="M0 5l2.500-2 1.500.5L6 0l4 5z" /></svg>
      <Slider>
        <Track />
        <Thumb><svg width="11" height="11"><path d="M5.500.5 10.500 6v4.500H.5V6z" fill="#f0f0f0" stroke="#333" strokeWidth=".6" /></svg></Thumb>
      </Slider>
      <svg width="18" height="8" fill={ink}><path d="M0 8l5-4.500 1.500 1L9.500 0l3 3.500 1.200-.7L18 8z" /></svg>
      <Spacer $w={16} />
      <ScriptA $w={10}>𝒜</ScriptA><svg width="5" height="8" fill={ink}><path d="M2 0h1v5h2L2.500 8 0 5h2z" /></svg>
      <Spacer $w={9} />
      <ScriptA $w={10}>𝒜</ScriptA><svg width="5" height="8" fill={ink}><path d="M2 8h1V3h2L2.500 0 0 3h2z" /></svg>
    </Row>
    <Row $h={1} $line />
    <Grip $m="2px auto 0 143px" />
  </Float>
)

const layers = [
  ['Color Fill 1 copy 4', 23.7, 5.5], ['Color Fill 1 copy 4', 17.7, 5.5],
  ['Color Fill 1 copy 4', 23.7, 1], ['Color Fill 1 copy 4', 17.7, 1],
  ['Color Fill 1 copy 3', 8.5, 5.5], ['Color Fill 1 copy 2', 2.5, 5.5],
  ['Color Fill 1 copy', 8.5, 1], ['Color Fill 1', 2.5, 1],
]

const LayersPanel = () => (
  <Float $x={1574} $y={431} $w={286} $h={568}>
    <StripHead>
      <Double left /><Spacer $w={11} />
      <svg width="7" height="7" stroke="#c4c4c4" strokeWidth="2"><path d="m.5.5 6 6M6.500.5l-6 6" /></svg>
    </StripHead>
    <PanelTabs $h={29}>
      <PanelTab $w={47}>Layers</PanelTab><Spacer /><Burger />
    </PanelTabs>
    <Row $h={32} $pt={5} $pl={3} $line>
      <Select $w={88} $pl={7}><SearchIcon s={10} c="#eee" sw={2} /><Label $ml={5}>Kind</Label><Spacer /><Chevron /></Select>
      <Spacer $w={11} />
      <svg width="12" height="10" fill="none" stroke={ink} strokeWidth="1.2"><path d="M.6.6h10.800v8.800H.6z" /><path d="m2 8 2.500-4L6 6l1.500-2L10 8z" fill={ink} stroke="none" /></svg>
      <Spacer $w={13} />
      <AdjustIcon s={11} />
      <Spacer $w={14} />
      <TypeIcon w={10} h={10} />
      <Spacer $w={13} />
      <svg width="12" height="12" fill="none" stroke={ink} strokeWidth="1.1"><path d="M2 2h8v8H2z" /><path d="M.5.5h2.400v2.400H.5zM9 .5h2.400v2.400H9zM.5 9h2.400v2.400H.5zM9 9h2.400v2.400H9z" fill={panel} /></svg>
      <Spacer $w={13} />
      <svg width="11" height="12" fill="none" stroke={ink} strokeWidth="1.2"><path d="M4 6V.6h3.500L10.400 3.500V11H6.500" /><path d="M7.300.5v3.200h3" /><path d="M0 6h6v6H0z" fill={ink} stroke="none" /></svg>
      <Spacer $w={12} />
      <svg width="9" height="20"><rect x="0" y="2" width="9" height="15" rx="4" fill="#3b3b3b" /><circle cx="4.5" cy="4" r="4" fill={ink} /></svg>
    </Row>
    <Row $h={28} $pt={1} $pl={3} $line>
      <Select $w={129}>Normal<Chevron /></Select>
      <Label $ml={7} $w={41}>Opacity:</Label>
      <Select $w={52} $h={17} $pl={4} $pr={0}>100%<Arrow><Chevron /></Arrow></Select>
    </Row>
    <Row $h={30} $pb={1} $pl={6}>
      <Label $w={33}>Lock:</Label>
      <svg width="11" height="11" fill="#a2a2a2"><path d="M.5.5h10v10H.5z" fill="none" stroke="#a2a2a2" /><path d="M3 1h2.500v2.500H3zM8 1h2v2.500H8zM1 3.500h2V6H1zM5.500 3.500H8V6H5.500zM3 6h2.500v2.500H3zM8 6h2v2.500H8zM1 8.500h2V10H1zM5.500 8.500H8V10H5.500z" /></svg>
      <Spacer $w={10} />
      <BrushIcon c="#999" s={13} />
      <Spacer $w={9} />
      <MoveIcon s={13} />
      <Spacer $w={10} />
      <svg width="14" height="13" fill="none" stroke={ink} strokeWidth="1.2"><path d="M2.500 0v13M0 2.500h9M11.500 5v8M0 11h14" /><path d="m9 1.500 3.500 4M9 2.500V5h2.500" /></svg>
      <Spacer $w={9} />
      <LockIcon />
      <Label $ml={23} $w={19}>Fill:</Label>
      <Select $w={52} $h={17} $pl={4} $pr={0}>100%<Arrow><Chevron /></Arrow></Select>
    </Row>
    <LayersBody>
      <LayerList>
        <ClippedRow />
        {[7, 6, 5, 4, 3, 2, 1].map(n => (
          <LayerRow key={n} $h={n === 7 ? 24 : 25}>
            <EyeCell><Eye /></EyeCell><Spacer $w={8} /><TypeIcon w={10} h={10} /><Label $ml={11} $c="#ececec">{n}</Label>
          </LayerRow>
        ))}
        {layers.map(([name, x, y], i) => (
          <LayerRow key={i}>
            <EyeCell><Eye /></EyeCell><FillThumb /><ChainIcon /><Mask $x={x} $y={y} />{name}
          </LayerRow>
        ))}
        <LayerRow $last $h={24}>
          <EyeCell><Eye /></EyeCell><PageThumb /><i>Background</i><Spacer /><LockIcon open /><Spacer $w={16} />
        </LayerRow>
      </LayerList>
      <LayerScroll><Chevron up c="#8e8e8e" /><ScrollThumb $h={353} $mt={22} /><Spacer /><Chevron c="#8e8e8e" /></LayerScroll>
    </LayersBody>
    <FooterIcons>
      <svg width="14" height="8" fill="none" stroke="#8a8a8a" strokeWidth="1.3"><path d="M6 1.500C5 .7 1 0 1 4s4 3.500 5 2.500M8 1.500C9 .7 13 0 13 4s-4 3.500-5 2.500M4 4h6" /></svg>
      <Spacer $w={15} />
      <svg width="12" height="14"><text x="0" y="11" fontFamily="Liberation Serif" fontStyle="italic" fontSize="14" fontWeight="bold" fill={ink}>fx</text><path d="M10 14h4l-2 2z" fill={ink} /></svg>
      <Spacer $w={13} />
      <svg width="13" height="10"><path d="M0 0h13v10H0z" fill={ink} /><circle cx="6.5" cy="5" r="3" fill={panel} /></svg>
      <Spacer $w={16} />
      <svg width="12" height="12"><AdjustIcon s={11} /><path d="M10 13h4l-2 2z" fill={ink} /></svg>
      <Spacer $w={14} />
      <svg width="12" height="10" fill={ink}><path d="M0 0h5l1 2h6v8H0z" /></svg>
      <Spacer $w={16} />
      <svg width="11" height="11" fill="none" stroke={ink} strokeWidth="1.2"><path d="M.6.6h9.800v9.800H.6zM5.500 3v5M3 5.500h5" /></svg>
      <Spacer $w={15} />
      <svg width="11" height="12" fill="none" stroke={ink} strokeWidth="1.1"><path d="M0 2.500h11M3.500 2.500V.7h4v1.800M1.500 2.500v9h8v-9M4 4.500v5M5.500 4.500v5M7 4.500v5" /></svg>
    </FooterIcons>
    <Grip $m="1px auto 0 132px" />
  </Float>
)

const App = () => (
  <Screen>
    <GlobalStyle />
    <TopMenu />
    <Options />
    <Workspace>
      <ToolColumn />
      <DocumentArea />
      <Docks />
    </Workspace>
    <BottomEdge />
    <HistoryPanel />
    <GlyphsPanel />
    <LayersPanel />
  </Screen>
)

export default App
